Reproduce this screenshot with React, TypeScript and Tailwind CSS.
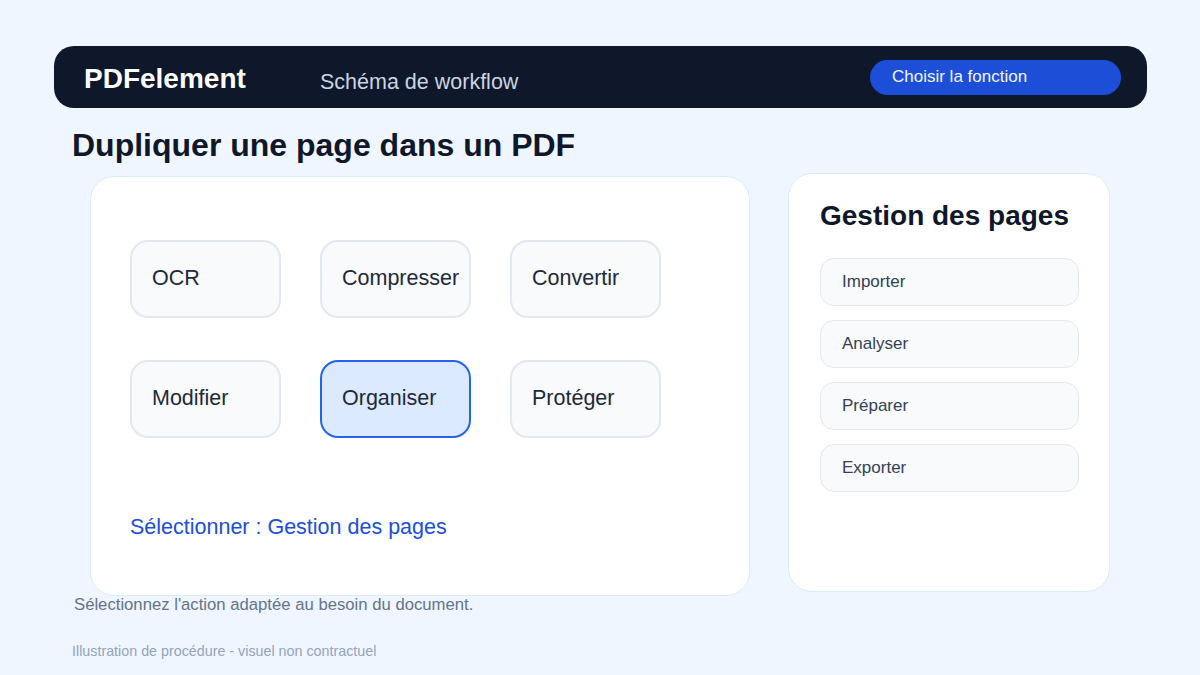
import React from "react";

const tools = ["OCR", "Compresser", "Convertir", "Modifier", "Organiser", "Protéger"];
const steps = ["Importer", "Analyser", "Préparer", "Exporter"];

export default function App() {
  const selected = "Organiser";

  return (
    <div className="w-[1200px] h-[675px] overflow-hidden bg-[#eff6ff] pt-[46px] leading-[1.15] font-['Liberation_Sans',Arial,sans-serif]">
      {/* Top bar */}
      <header className="ml-[54px] w-[1093px] h-[62px] rounded-[20px] bg-[#0f172a] flex items-center pl-[30px] pr-[26px]">
        <h1 className="w-[236px] mt-[5px] text-[28px] font-bold text-white">PDFelement</h1>
        <span className="mt-[10px] text-[21.5px] text-[#cbd5e1]">Schéma de workflow</span>
        <button className="ml-auto w-[251px] h-[35px] rounded-full bg-[#1d4ed8] text-left pl-[22px] text-[17px] text-[#eff6ff]">
          Choisir la fonction
        </button>
      </header>

      {/* Title */}
      <h2 className="ml-[72px] mt-[19px] text-[32px] font-bold text-[#0f172a]">Dupliquer une page dans un PDF</h2>

      <div className="ml-[90px] mt-[9px] flex items-start gap-[38px]">
        {/* Main card */}
        <div className="mt-[3px] w-[660px] h-[420px] rounded-[24px] border border-[#dbeafe] bg-white pt-[63px] pl-[39px]">
          <div className="grid grid-cols-[151px_151px_151px] gap-x-[39px] gap-y-[42px]">
            {tools.map((t) => (
              <div
                key={t}
                className={
                  t === selected
                    ? "h-[78px] rounded-[18px] border-2 border-[#2563eb] bg-[#dbeafe] flex items-center pl-[20px] text-[21.5px] text-[#1e293b] whitespace-nowrap"
                    : "h-[78px] rounded-[18px] border-2 border-[#e2e8f0] bg-[#f8fafc] flex items-center pl-[20px] text-[21.5px] text-[#1e293b] whitespace-nowrap"
                }
              >
                {t}
              </div>
            ))}
          </div>
          <p className="mt-[77px] text-[21.5px] text-[#1d4ed8]">Sélectionner : Gestion des pages</p>
        </div>

        {/* Side card */}
        <div className="w-[322px] h-[419px] rounded-[24px] border border-[#dbeafe] bg-white pt-[26px] pl-[31px]">
          <h3 className="text-[28px] font-bold text-[#0f172a]">Gestion des pages</h3>
          <div className="mt-[26px] flex flex-col gap-[14px]">
            {steps.map((s) => (
              <div
                key={s}
                className="w-[259px] h-[48px] rounded-[14px] border border-[#e2e8f0] bg-[#f8fafc] flex items-center pl-[21px] text-[17px] text-[#334155]"
              >
                {s}
              </div>
            ))}
          </div>
        </div>
      </div>

      <p className="ml-[74px] -mt-[1px] text-[16.7px] text-[#64748b]">Sélectionnez l'action adaptée au besoin du document.</p>
      <p className="ml-[72px] mt-[29px] text-[14.3px] text-[#94a3b8]">Illustration de procédure - visuel non contractuel</p>
    </div>
  );
}
